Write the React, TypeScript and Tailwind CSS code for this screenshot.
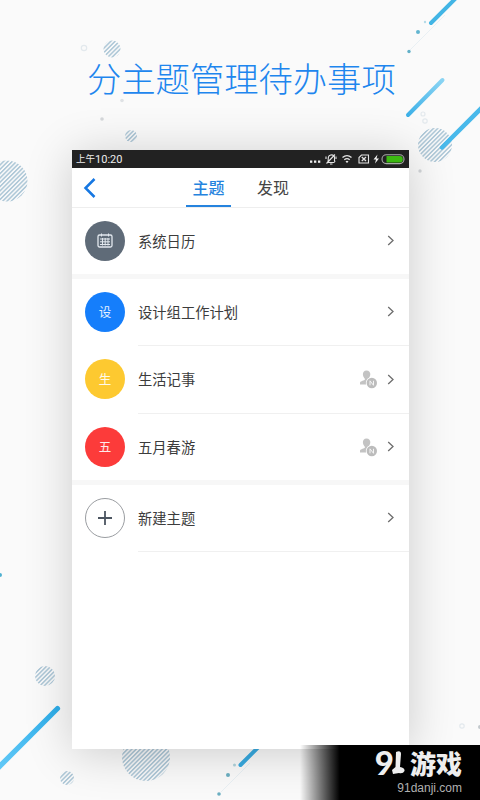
import type { ReactNode } from 'react';

const hatched = [
  [112, 49, 8.5], [131, 136, 6], [7, 181, 20.5], [435, 145, 17],
  [45, 676, 10], [67, 778, 7], [146, 757, 24],
];
const dots: [number, number, number, string][] = [
  [418, 32, 2, '#62b5d0'], [409, 51.5, 1.7, '#62b0c8'], [425, 22, 1.2, '#b5dbe8'],
  [0, 575, 2, '#4fb0d0'], [228, 775, 2, '#6cafc2'], [219, 794, 1.8, '#6cafc2'],
  [234.5, 765, 1.5, '#b0d3dc'], [102, 119, 1.8, '#d5d7da'],
  [122, 100.5, 1.8, '#dfe2e5'], [420, 171, 1.7, '#d3d6d9'], [480, 727, 2, '#c2c8cc'],
];
const rings = [[84, 48, 2.7], [423, 114, 2], [425, 121, 2.2], [462, 726, 2.2]];

function Backdrop() {
  return (
    <svg className="absolute inset-0" width="480" height="800" viewBox="0 0 480 800" fill="none">
      <defs>
        <pattern id="hatch" width="3.05" height="3.05" patternUnits="userSpaceOnUse" patternTransform="rotate(45)">
          <rect width="1.6" height="3.05" fill="#b0c9d8" />
        </pattern>
        <linearGradient id="fade" x1="0" y1="1" x2="1" y2="0">
          <stop stopColor="#3eb1e8" />
          <stop offset="1" stopColor="#8ad4f3" />
        </linearGradient>
        <linearGradient id="deep" x1="0" y1="1" x2="1" y2="0">
          <stop stopColor="#63c9f7" />
          <stop offset="1" stopColor="#2eaeea" />
        </linearGradient>
      </defs>
      {hatched.map(([x, y, r]) => <circle key={x} cx={x} cy={y} r={r} fill="url(#hatch)" />)}
      {rings.map(([x, y, r]) => <circle key={x} cx={x} cy={y} r={r} stroke="#e3e9ed" strokeWidth="1.2" />)}
      <path d="M410 50L445 15M221 792L250 763" stroke="#e9f0f4" strokeWidth="1" />
      {dots.map(([x, y, r, c]) => <circle key={`${x}-${y}`} cx={x} cy={y} r={r} fill={c} />)}
      <g strokeLinecap="round">
        <path d="M431 23L458 -4" stroke="#42b5e5" strokeWidth="4" />
        <path d="M408 115L442.500 80" stroke="url(#fade)" strokeWidth="4" />
        <path d="M442 147.500L484 105.500" stroke="#48b9eb" strokeWidth="4.500" />
        <path d="M57.500 708.500L-4 770" stroke="url(#deep)" strokeWidth="5.200" />
        <path d="M240.500 765L268 737.500" stroke="#38aae0" strokeWidth="4" />
      </g>
    </svg>
  );
}

function StatusIcons() {
  return (
    <svg width="98" height="18" viewBox="0 0 98 18" fill="none" stroke="#e4e4e4" strokeWidth="1.100">
      <g fill="#eee" stroke="none">
        <rect x="1" y="10.500" width="2.300" height="2.300" />
        <rect x="5" y="10.500" width="2.300" height="2.300" />
        <rect x="9" y="10.500" width="2.300" height="2.300" />
      </g>
      <path d="M18.500 12.500H25.500M18.800 12C20 10 18 6 21 5.200C24 4 26 6 25.500 8.500C25.300 10 25.500 11 26 12M17.500 13.500L26 4.500M21 14H23.500M17 6.500V9M27 6.500V9" />
      <path d="M33.500 7.500Q38 3.800 42.500 7.500M35.300 9.700Q38 7.500 40.700 9.700" strokeWidth="1.400" />
      <path d="M36.500 11.500L38 13L39.500 11.500L38 10.700Z" fill="#eee" stroke="none" />
      <path d="M52.500 5H59.500V13H50V7.500Z" />
      <path d="M52.800 7L57 11M57 7L52.800 11" strokeWidth="1.300" />
      <path d="M68.500 4.500L64.500 9.500H67L66 13.500L70 8.500H67.500Z" fill="#f2f2f2" stroke="none" />
      <rect x="73" y="4.800" width="22" height="8.800" rx="4.300" stroke="#aaa" />
      <path d="M77.500 6H91Q93.800 6 93.800 9.200T91 12.400H77.500Z" fill="#3cb911" stroke="none" />
    </svg>
  );
}

function Chevron() {
  return (
    <svg className="shrink-0" width="8" height="12" viewBox="0 0 8 12" fill="none">
      <path d="M1.200 1L6 5.500L1.200 10" stroke="#6d6d6d" strokeWidth="1.300" />
    </svg>
  );
}

function MutedMember() {
  return (
    <svg className="mr-[9px]" width="19" height="19" viewBox="0 0 19 19">
      <path d="M7.500 0.500C10 0.500 11.500 2.200 11.300 4.500C11.200 6.500 10 7.500 9.500 9.500L8 14.500H1V12.500C1.500 11 5.500 10.500 6 9.500C6 8 3.900 7 3.900 4.500C3.800 2.200 5 0.500 7.500 0.500Z" fill="#c3c3c3" />
      <circle cx="12.800" cy="13" r="6" fill="#fff" />
      <circle cx="12.800" cy="13" r="5.200" fill="#bcbcbc" />
      <path d="M11 15.300V10.800L14.500 15.300V10.800" stroke="#f4f4f4" fill="none" />
    </svg>
  );
}

interface RowProps { label: string; badge: ReactNode; color: string; height: string; line?: boolean; muted?: boolean }

function Row({ label, badge, color, height, line, muted }: RowProps) {
  return (
    <div className={`flex pl-[13px] ${height}`}>
      <div className={`mr-[13px] mt-[13px] flex size-10 shrink-0 items-center justify-center rounded-full text-[12.500px] leading-none text-white/90 ${color}`}>
        {badge}
      </div>
      <div className={`flex grow items-center pr-[14px] ${line ? 'border-b border-[#f0f0f0]' : ''}`}>
        <span className="-mt-px grow text-[14.300px] leading-5 text-[#3c3c3c]">{label}</span>
        {muted && <MutedMember />}
        <Chevron />
      </div>
    </div>
  );
}

export default function App() {
  return (
    <div className="relative h-[800px] w-[480px] overflow-hidden bg-[#fafafa] font-['Noto_Sans_CJK_SC',sans-serif]">
      <Backdrop />
      <div className="relative flex h-full flex-col">
        <h1 className="h-[150px] whitespace-nowrap pl-[87px] pt-[52px] text-[34.300px] font-light leading-[50px] text-[#1e86ee]">分主题管理待办事项</h1>
        <main className="ml-[72px] h-[599px] w-[337px] bg-white shadow-[0_4px_44px_rgba(0,0,0,0.19)]">
          <div className="flex h-[18px] items-center justify-between bg-[#222] pl-1 pr-[2px] text-[11px] leading-none text-[#ededed]">
            <div className="flex items-center"><span className="text-[9.500px]">上午</span><span className="font-['Roboto',sans-serif]">10:20</span></div>
            <StatusIcons />
          </div>
          <nav className="flex h-10 border-b border-[#eee] pl-[11px] text-[16px] leading-[38px]">
            <svg className="mt-[9px]" width="14" height="22" viewBox="0 0 14 22" fill="none">
              <path d="M11.500 2L2.500 11L11.500 20" stroke="#1677e2" strokeWidth="2.500" />
            </svg>
            <div className="ml-[89px] w-[45px] border-b-2 border-[#2583de] text-center font-medium text-[#2583de]">主题</div>
            <div className="ml-[26px] text-[#444]">发现</div>
          </nav>
          <Row height="h-[66px]" label="系统日历" color="bg-[#5f6b78]" badge={
            <svg width="16" height="16" viewBox="0 0 16 16" fill="none" stroke="#e2e8ee" strokeWidth="1">
              <rect x="1" y="2" width="14" height="12" rx="1.500" strokeWidth="1.300" />
              <path d="M4.500 0.500V3.500M11.500 0.500V3.500M3 6H13M3 8.800H13M3 11.500H13M5.500 5V12.500M8.200 5V12.500M11 5V12.500" />
            </svg>
          } />
          <div className="h-[5px] bg-[#f7f7f7]" />
          <Row height="h-[67px]" label="设计组工作计划" color="bg-[#157efb]" badge="设" line />
          <Row height="h-[68px]" label="生活记事" color="bg-[#fdc930]" badge="生" line muted />
          <Row height="h-[66px]" label="五月春游" color="bg-[#fc3b3a]" badge="五" muted />
          <div className="h-[5px] bg-[#f7f7f7]" />
          <Row height="h-[67px]" label="新建主题" color="border border-[#9a9da1] bg-white" badge={
            <svg width="16" height="16" viewBox="0 0 16 16"><path d="M8 1V15M1 8H15" stroke="#4c5561" strokeWidth="1.800" /></svg>
          } line />
        </main>
      </div>
      <footer className="absolute bottom-0 right-0 flex h-[55px] w-[180px] flex-col items-end bg-linear-to-r from-transparent to-black to-[22%] pr-[18px] text-[#eee]">
        <div className="flex h-[33px] items-center whitespace-nowrap pt-[2px]">
          <span className="font-['Lato',sans-serif] text-[33px] font-black leading-[25px] tracking-[-2px]">9</span>
          <svg className="mr-[5px]" width="13" height="25" viewBox="0 0 13 25">
            <path d="M4 2Q9 0 9 4L8 17Q13 18 12.500 21Q11 24 7 23L1 24L0 20L3.500 17Z" fill="#eee" />
          </svg>
          <span className="text-[26px] font-black leading-[25px]">游戏</span>
        </div>
        <div className="pt-[3px] font-['Liberation_Sans',sans-serif] text-[12px] leading-[14px] text-[#b0b0b0]">91danji.com</div>
      </footer>
    </div>
  );
}
